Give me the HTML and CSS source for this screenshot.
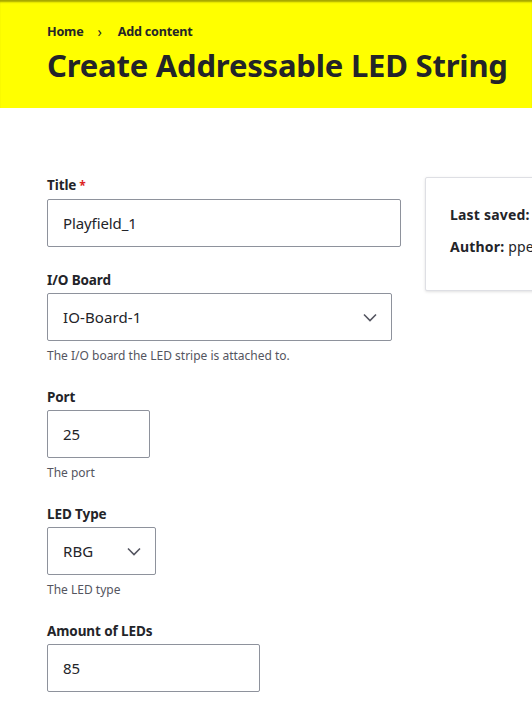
FILE: index.html
```html
<!DOCTYPE html>
<html lang="en">
<head>
<meta charset="utf-8">
<title>Create Addressable LED String</title>
<link rel="stylesheet" href="styles.css">
</head>
<body>
<header class="page-header">
  <nav class="breadcrumb">
    <a href="#">Home</a>
    <span class="sep">›</span>
    <a href="#">Add content</a>
  </nav>
  <h1 class="page-title">Create Addressable LED String</h1>
</header>
<main class="layout">
  <form class="form">
    <div class="field">
      <label class="label">Title<span class="req">*</span></label>
      <input class="input w-title" type="text" value="Playfield_1">
    </div>
    <div class="field">
      <label class="label">I/O Board</label>
      <div class="select w-board"><span>IO-Board-1</span><svg class="chev" width="14" height="9" viewBox="0 0 14 9"><path d="M1 1.5l6 6 6-6" fill="none" stroke="#545560" stroke-width="1.6"/></svg></div>
      <div class="desc">The I/O board the LED stripe is attached to.</div>
    </div>
    <div class="field">
      <label class="label">Port</label>
      <input class="input w-port" type="text" value="25">
      <div class="desc">The port</div>
    </div>
    <div class="field">
      <label class="label">LED Type</label>
      <div class="select w-type"><span>RBG</span><svg class="chev" width="14" height="9" viewBox="0 0 14 9"><path d="M1 1.5l6 6 6-6" fill="none" stroke="#545560" stroke-width="1.6"/></svg></div>
      <div class="desc">The LED type</div>
    </div>
    <div class="field">
      <label class="label">Amount of LEDs</label>
      <input class="input w-amount" type="text" value="85">
    </div>
  </form>
  <aside class="card">
    <div class="meta"><b>Last saved:</b> <span class="val">Not saved yet</span></div>
    <div class="meta"><b>Author:</b> ppe</div>
  </aside>
</main>
</body>
</html>
```
FILE: styles.css
```css
* { box-sizing: border-box; }
html, body { margin: 0; padding: 0; background: #fff; }
body {
  font-family: "Noto Sans", "Open Sans", sans-serif;
  color: #232429;
  overflow: hidden;
  width: 532px;
}
.page-header {
  background: #ffff00;
  height: 108px;
  padding: 22px 0 0 47px;
  box-shadow: inset 0 3px 2px -1px rgba(90, 90, 0, 0.55);
}
.breadcrumb {
  display: flex;
  align-items: center;
  font-size: 12.6px;
  font-weight: 700;
  line-height: 20px;
  letter-spacing: -0.2px;
}
.breadcrumb a { color: #232429; text-decoration: none; }
.breadcrumb .sep { margin: 0 16px 0 14px; font-weight: 400; font-size: 14px; }
.page-title {
  margin: 4px 0 0;
  font-size: 31px;
  line-height: 38px;
  font-weight: 700;
  letter-spacing: -0.2px;
  white-space: nowrap;
}
.layout {
  display: flex;
  align-items: flex-start;
  padding: 69px 0 0 47px;
}
.form { width: 354px; flex: none; margin-top: -1px; }
.field { display: flex; flex-direction: column; align-items: flex-start; margin-bottom: 24px; }
.label {
  font-size: 13.5px;
  font-weight: 700;
  line-height: 18px;
  margin-bottom: 4px;
  letter-spacing: -0.1px;
}
.req { color: #dc2323; margin-left: 3px; font-size: 12px; }
.input, .select {
  height: 48px;
  border: 1px solid #8e929c;
  border-radius: 2px;
  background: #fff;
  font-family: inherit;
  font-size: 15px;
  color: #232429;
  padding: 0 15px;
  display: flex;
  align-items: center;
}
.input { outline: none; letter-spacing: -0.1px; }
.select { justify-content: space-between; padding-right: 14px; letter-spacing: 0.1px; }
.w-title { width: 354px; }
.w-board { width: 345px; }
.w-port { width: 103px; }
.w-type { width: 109px; }
.w-amount { width: 213px; }
.desc {
  margin-top: 7px;
  font-size: 12px;
  line-height: 16px;
  color: #545560;
}
.card {
  margin: 0 0 0 24px;
  width: 200px;
  flex: none;
  border: 1px solid #dedfe4;
  border-radius: 2px;
  box-shadow: 0 1px 3px rgba(0,0,0,0.12);
  padding: 27px 24px 33px 24px;
  background: #fff;
}
.meta {
  font-size: 14px;
  line-height: 20px;
  white-space: nowrap;
  margin-bottom: 12px;
  letter-spacing: 0.2px;
}
.meta .val { margin-left: 4px; }
.meta:last-child { margin-bottom: 0; }
.meta b { font-weight: 700; }
```
